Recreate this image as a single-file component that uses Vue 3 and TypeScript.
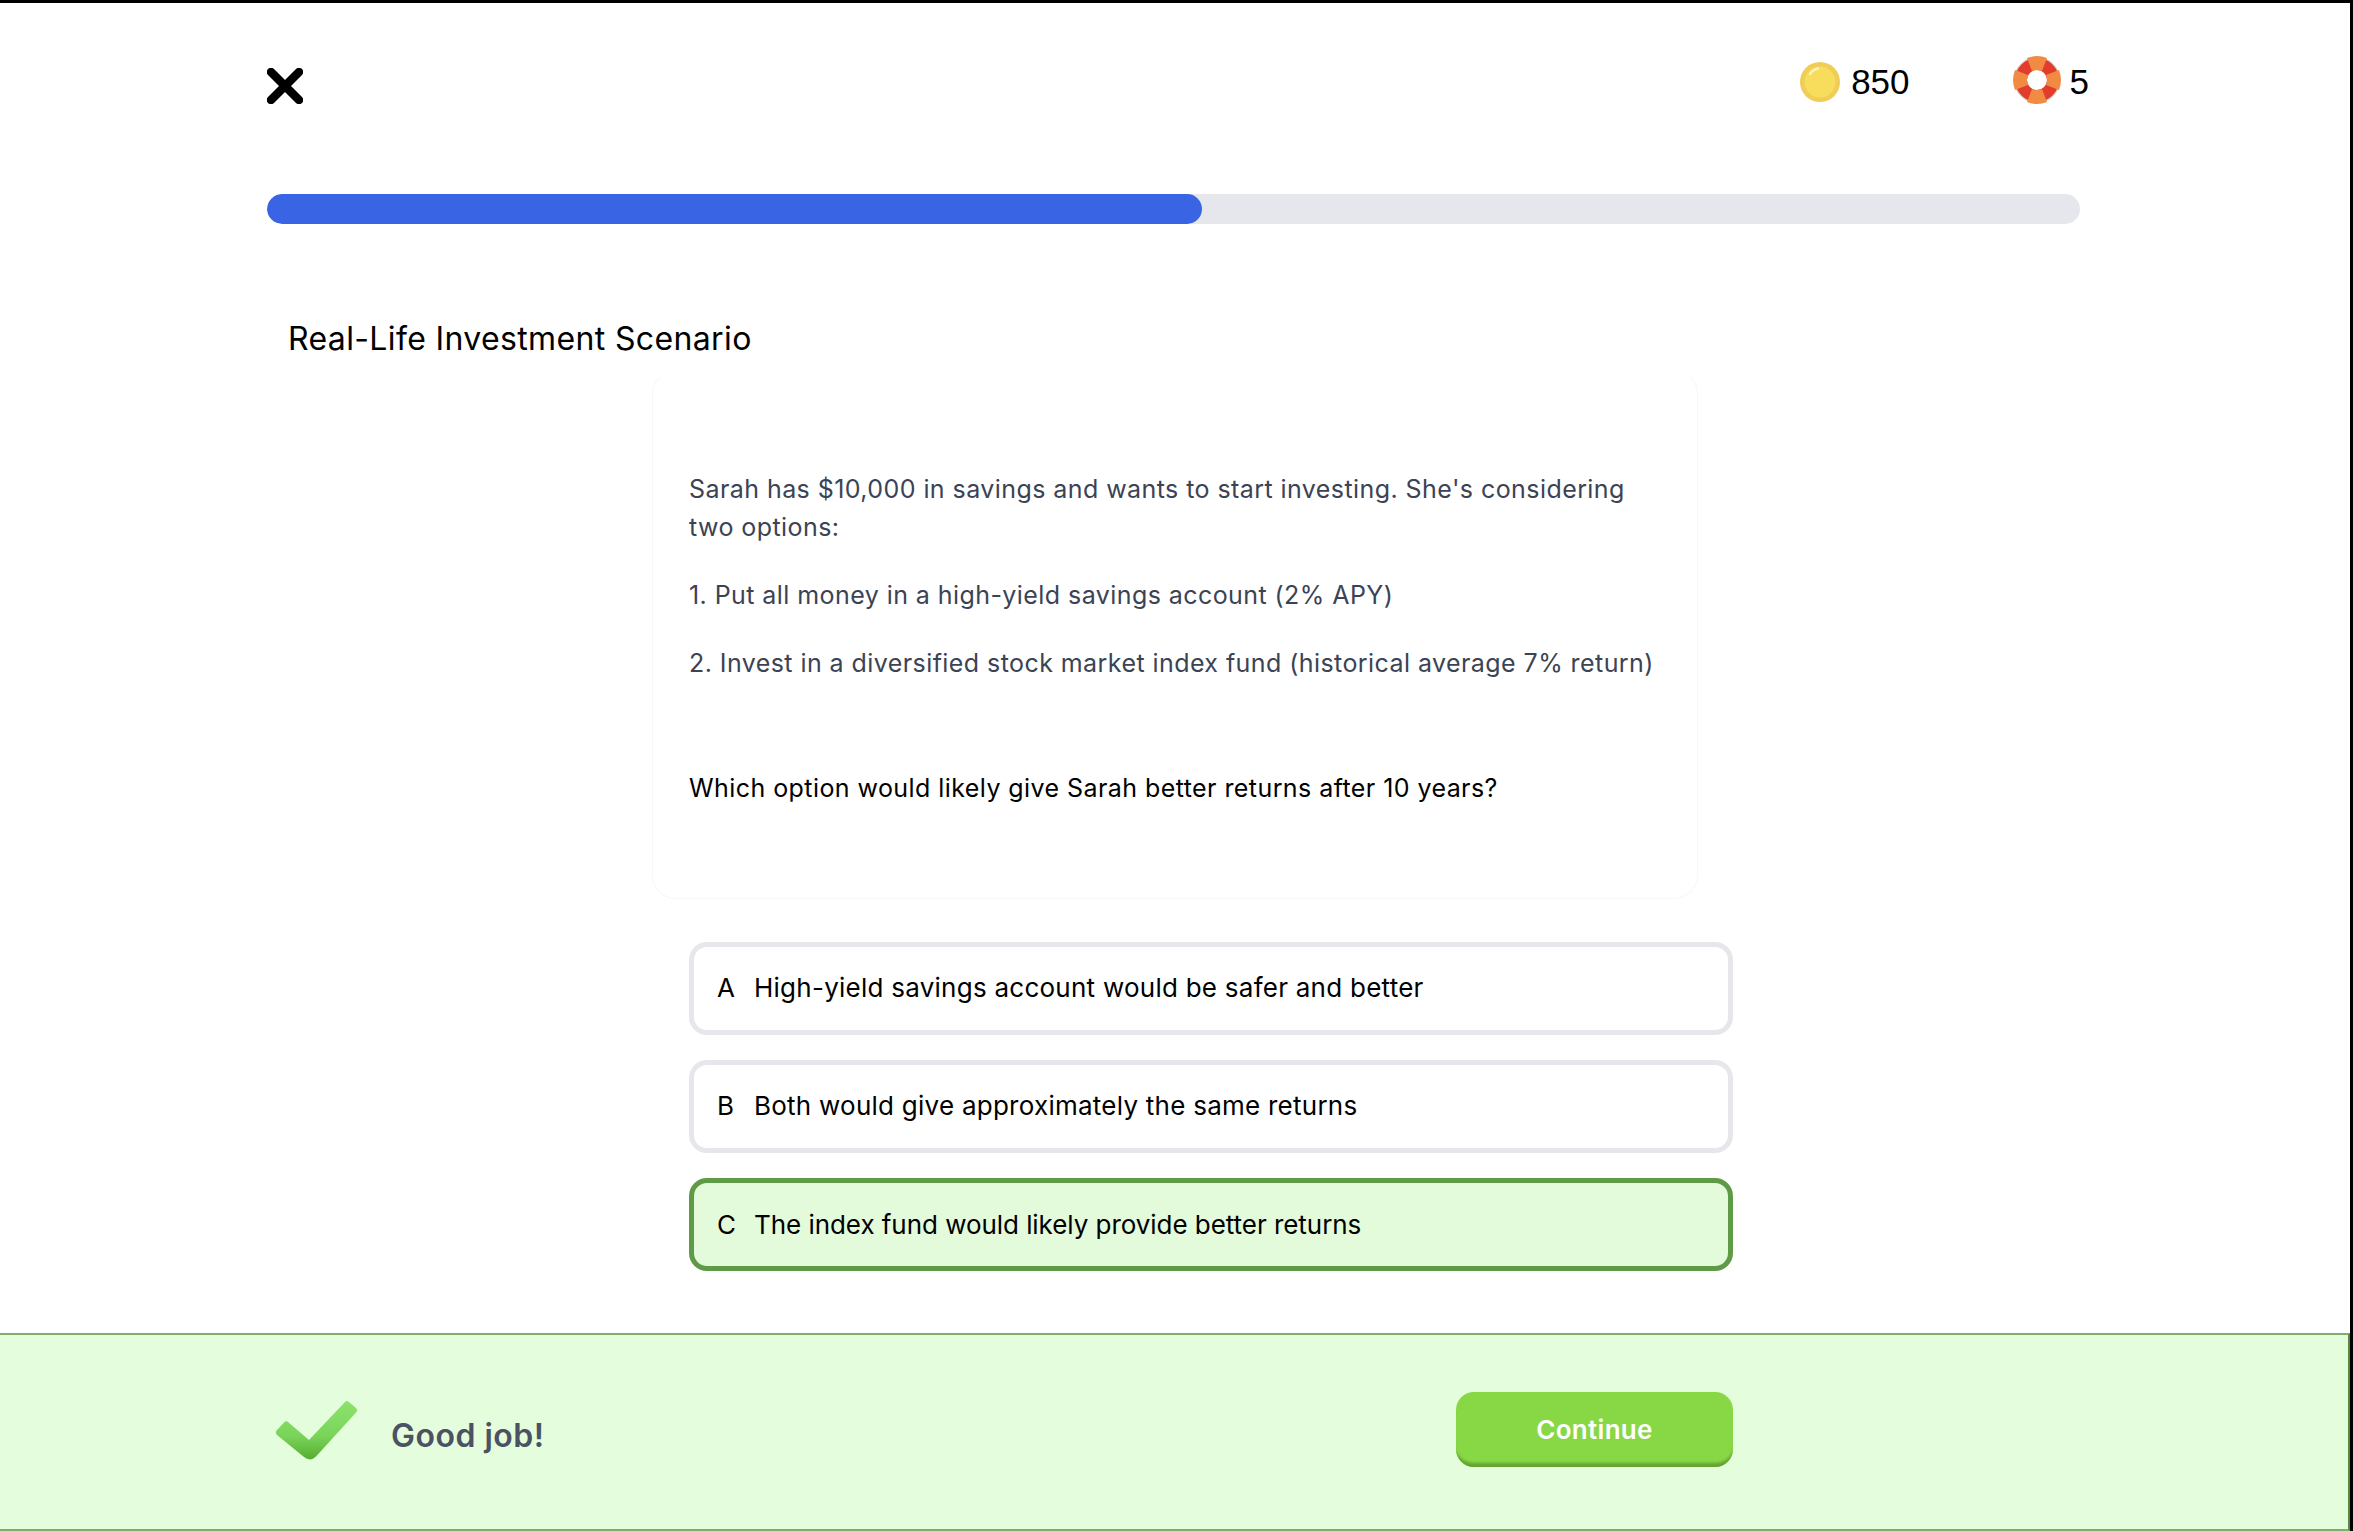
<script setup lang="ts">
interface Option {
  letter: string
  text: string
  selected?: boolean
}

const options: Option[] = [
  { letter: 'A', text: 'High-yield savings account would be safer and better' },
  { letter: 'B', text: 'Both would give approximately the same returns' },
  { letter: 'C', text: 'The index fund would likely provide better returns', selected: true }
]

const progress = 51.55
const buoyAngles = [0, 90, 180, 270]
</script>

<template>
  <div class="screen">
    <header class="top">
      <svg class="close" width="36" height="36" viewBox="0 0 36 36">
        <path d="M4 4 L32 32 M32 4 L4 32" stroke="#000" stroke-width="8.5" stroke-linecap="round" fill="none" />
      </svg>
      <div class="stat coins">
        <svg width="40" height="40" viewBox="0 0 40 40">
          <circle cx="20" cy="20" r="20" fill="#efcd57" />
          <circle cx="20" cy="20" r="15.5" fill="#f8dc5c" />
          <path d="M10 12 Q13 7.5 18 6.5" stroke="#fdf3b8" stroke-width="2.5" stroke-linecap="round" fill="none" />
        </svg>
        <span>850</span>
      </div>
      <div class="stat lives">
        <svg width="48" height="48" viewBox="0 0 48 48">
          <circle cx="24" cy="24" r="22.5" fill="none" stroke="#bdbdbd" stroke-width="1" />
          <circle cx="24" cy="24" r="16" fill="none" stroke="#e23c2c" stroke-width="12" />
          <path
            v-for="angle in buoyAngles"
            :key="angle"
            d="M19 15 L14 2 Q24 -2 34 2 L29 15 Q24 13 19 15 Z"
            fill="#f18a42"
            :transform="`rotate(${angle} 24 24)`"
          />
        </svg>
        <span>5</span>
      </div>
    </header>

    <div class="track">
      <div class="fill" :style="{ width: `${progress}%` }"></div>
    </div>

    <h1 class="title">Real-Life Investment Scenario</h1>

    <main class="lesson">
      <section class="card">
        <p>Sarah has $10,000 in savings and wants to start investing. She's considering two options:</p>
        <p>1. Put all money in a high-yield savings account (2% APY)</p>
        <p>2. Invest in a diversified stock market index fund (historical average 7% return)</p>
        <p class="question">Which option would likely give Sarah better returns after 10 years?</p>
      </section>

      <ul class="options">
        <li v-for="opt in options" :key="opt.letter" class="option" :class="{ selected: opt.selected }">
          <span class="letter">{{ opt.letter }}</span>
          <span>{{ opt.text }}</span>
        </li>
      </ul>
    </main>

    <footer class="result">
      <div class="verdict">
        <svg class="tick" width="84" height="62" viewBox="0 0 84 62">
          <defs>
            <linearGradient id="tick" x1="0" y1="0" x2="0" y2="1">
              <stop offset="0" stop-color="#8ce36c" />
              <stop offset="0.6" stop-color="#7bd45a" />
              <stop offset="1" stop-color="#55ae2f" />
            </linearGradient>
          </defs>
          <path
            d="M1.5 30.5 L9 22.5 Q11 20.5 13 22 L34 40 L70 2 Q72 0 74 2 L81.500 8.500 Q83 10.500 81.500 12 L41 56.500 Q35.500 62 29 57 L2 35 Q0 32.500 1.500 30.500 Z"
            fill="url(#tick)"
          />
        </svg>
        <span class="verdict-text">Good job!</span>
      </div>
      <button class="continue" type="button">Continue</button>
    </footer>
  </div>
</template>

<style>
html,
body {
  margin: 0;
  background: #000;
}
</style>

<style scoped>
.screen {
  box-sizing: border-box;
  width: 2353px;
  height: 1531px;
  border-top: 3px solid #000;
  border-right: 3px solid #000;
  background: #fff;
  display: flex;
  flex-direction: column;
  font-family: Inter, "Noto Sans", sans-serif;
  overflow: hidden;
}

.top {
  display: flex;
  align-items: flex-start;
  padding: 53px 261px 0 267px;
}

.close {
  margin-top: 12px;
}

.stat {
  display: flex;
  align-items: center;
  font-family: "Liberation Sans", Arial, sans-serif;
  font-size: 35px;
  color: #000;
}

.coins {
  margin-left: auto;
  gap: 11px;
  margin-top: 6px;
}

.lives {
  margin-left: 103px;
  gap: 9px;
}

.lives span {
  margin-top: 3px;
}

.track {
  width: 1813px;
  height: 30px;
  margin: 90px 0 0 267px;
  border-radius: 15px;
  background: #e6e7ec;
  overflow: hidden;
}

.fill {
  height: 100%;
  border-radius: 15px;
  background: #3964e3;
}

.title {
  margin: 91px 0 0 288px;
  font-size: 32px;
  line-height: 48px;
  font-weight: 400;
  letter-spacing: 0.36px;
  color: #000;
}

.lesson {
  margin-left: 652px;
  width: 1081px;
}

.card {
  box-sizing: border-box;
  width: 1046px;
  margin-top: 7px;
  padding: 99px 36px 91px;
  border: 1px solid #f7f7f7;
  border-top-color: transparent;
  border-radius: 24px;
  font-size: 25px;
  line-height: 38px;
  letter-spacing: 0.43px;
  color: #3b4355;
}

.card p {
  margin: 0 0 30px;
}

.card .question {
  margin: 87px 0 0;
  color: #000;
}

.options {
  list-style: none;
  margin: 43px 0 0 37px;
  padding: 0;
  display: flex;
  flex-direction: column;
  gap: 25px;
}

.option {
  box-sizing: border-box;
  height: 93px;
  display: flex;
  align-items: center;
  padding: 0 0 3px 23px;
  border: 5px solid #e6e7eb;
  border-radius: 18px;
  font-size: 26px;
  letter-spacing: 0.25px;
  color: #000;
}

.option.selected {
  padding-bottom: 1px;
  border-color: #5f9a46;
  background: #e3fadb;
  letter-spacing: -0.05px;
}

.letter {
  width: 37px;
}

.result {
  box-sizing: border-box;
  margin-top: auto;
  height: 198px;
  display: flex;
  align-items: center;
  justify-content: space-between;
  padding: 0 615px 0 275px;
  background: #e4fddc;
  border-top: 2px solid #7daf68;
  border-bottom: 2px solid #7daf68;
  border-right: 2px solid #55893f;
}

.verdict {
  display: flex;
  align-items: center;
  gap: 32px;
  font-size: 32px;
  font-weight: 600;
  letter-spacing: 0.5px;
  color: #4a5263;
}

.tick {
  margin-top: -3px;
}

.verdict-text {
  margin-top: 6px;
}

.continue {
  width: 277px;
  height: 75px;
  margin-top: -5px;
  border: none;
  border-radius: 18px;
  background: #88d846;
  box-shadow: inset 0 -6px 3px -2px #66a135;
  font-family: inherit;
  font-size: 26px;
  font-weight: 600;
  letter-spacing: 0.3px;
  color: #fff;
}
</style>
